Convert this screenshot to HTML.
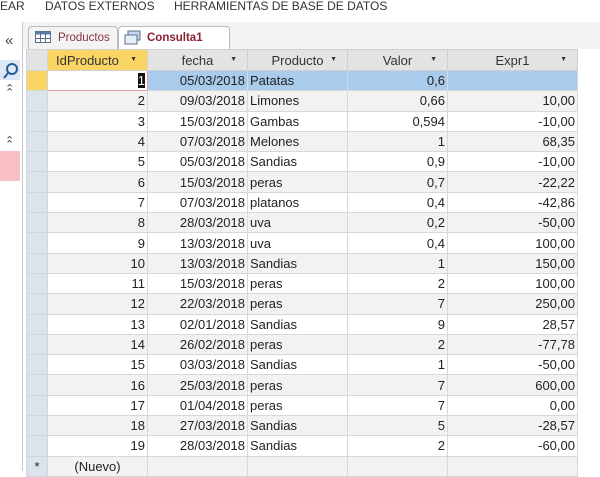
<!DOCTYPE html><html><head><style>
body{margin:0;width:600px;height:471px;overflow:hidden;background:#fff;font-family:"Liberation Sans",sans-serif;position:relative}
.menu{position:absolute;top:0;left:0;height:20px;font-size:12px;color:#333;white-space:nowrap}
.menu span{position:absolute;top:-1px}
.nav{position:absolute;left:0;top:22px;width:22px;height:449px;background:#fff;border-right:1px solid #c8c8c8}
.tabbar{position:absolute;left:23px;top:22px;width:577px;height:27px;background:#f3f3f3}
.tab{position:absolute;top:4px;height:22px;font-size:11.5px;line-height:22px;border:1px solid #bbb;border-bottom:none;border-radius:4px 4px 0 0}
table{position:absolute;left:26px;top:49px;border-collapse:collapse;table-layout:fixed;width:551px;font-size:13px;color:#222}
td{height:19.3px;padding:0 2px;border:1px solid #d8d8d8;white-space:nowrap;overflow:hidden;box-sizing:border-box}
tr{height:20.3px}
th{height:21px;background:#e3e3e3;font-weight:normal;border:1px solid #cfcfcf;position:relative;text-align:center;color:#333;font-size:13px;padding:0;box-sizing:border-box}
th i{position:absolute;right:10px;top:6px;font-style:normal;font-size:7px}
.s{background:#dde3ea;border-color:#cfd6de}
.r{text-align:right}
tr.g td{background:#f2f2f2}
tr.g td.s{background:#dde3ea}
</style></head><body>
<div class="menu"><span style="left:0">EAR</span><span style="left:45px">DATOS EXTERNOS</span><span style="left:174px">HERRAMIENTAS DE BASE DE DATOS</span></div>
<div class="nav">
<div style="position:absolute;left:5px;top:10px;font-size:15px;color:#444">«</div>
<div style="position:absolute;left:0;top:38px;width:20px;height:20px;background:#dde8f4"></div>
<svg style="position:absolute;left:2px;top:40px" width="18" height="18"><circle cx="10" cy="7" r="5" fill="none" stroke="#2a5a9a" stroke-width="2"/><line x1="6" y1="11" x2="2" y2="16" stroke="#2a5a9a" stroke-width="2"/></svg>
<div style="position:absolute;left:5px;top:60px;font-size:11px;color:#444">⌃</div>
<div style="position:absolute;left:5px;top:64px;font-size:11px;color:#444">⌃</div>
<div style="position:absolute;left:5px;top:112px;font-size:11px;color:#444">⌃</div>
<div style="position:absolute;left:5px;top:116px;font-size:11px;color:#444">⌃</div>
<div style="position:absolute;left:0;top:129px;width:20px;height:30px;background:#f8c0c4"></div>
</div>
<div class="tabbar">
<div class="tab" style="left:5px;width:88px;background:#f3f3f3;color:#8a3344"><svg style="position:absolute;left:6px;top:4px" width="16" height="12"><rect x="0.5" y="0.5" width="15" height="11" fill="#fff" stroke="#5a6e8a"/><rect x="0.5" y="0.5" width="15" height="3" fill="#5a7ca8"/><line x1="0" y1="7.5" x2="16" y2="7.5" stroke="#5a6e8a"/><line x1="5.5" y1="0" x2="5.5" y2="12" stroke="#5a6e8a"/><line x1="10.5" y1="0" x2="10.5" y2="12" stroke="#5a6e8a"/></svg><span style="margin-left:29px">Productos</span></div>
<div class="tab" style="left:95px;width:110px;background:#fff;color:#8a2233;font-weight:bold;height:23px"><svg style="position:absolute;left:5px;top:3px" width="18" height="15"><rect x="4" y="1" width="12" height="9" fill="#c8d8ea" stroke="#5a6e8a"/><rect x="1" y="5" width="12" height="9" fill="#e8eef6" stroke="#5a6e8a"/></svg><span style="margin-left:28px">Consulta1</span></div>
</div>
<table>
<colgroup><col style="width:21px"><col style="width:100px"><col style="width:100px"><col style="width:100px"><col style="width:100px"><col style="width:130px"></colgroup>
<tr><th class="s" style="background:#e3e3e3"></th><th style="background:#fbd564;text-align:left;padding-left:8px">IdProducto<i>▼</i></th><th>fecha<i>▼</i></th><th>Producto<i>▼</i></th><th>Valor<i>▼</i></th><th>Expr1<i>▼</i></th></tr>
<tr><td class="s" style="background:#fbd564"></td><td class="r" style="background:#fff;border:1px solid #e0a0a0"><span style="background:#111;color:#fff">1</span></td><td class="r" style="background:#a9cbec">05/03/2018</td><td style="background:#a9cbec">Patatas</td><td class="r" style="background:#a9cbec">0,6</td><td style="background:#a9cbec"></td></tr>
<tr class="g"><td class="s"></td><td class="r">2</td><td class="r">09/03/2018</td><td>Limones</td><td class="r">0,66</td><td class="r">10,00</td></tr>
<tr><td class="s"></td><td class="r">3</td><td class="r">15/03/2018</td><td>Gambas</td><td class="r">0,594</td><td class="r">-10,00</td></tr>
<tr class="g"><td class="s"></td><td class="r">4</td><td class="r">07/03/2018</td><td>Melones</td><td class="r">1</td><td class="r">68,35</td></tr>
<tr><td class="s"></td><td class="r">5</td><td class="r">05/03/2018</td><td>Sandias</td><td class="r">0,9</td><td class="r">-10,00</td></tr>
<tr class="g"><td class="s"></td><td class="r">6</td><td class="r">15/03/2018</td><td>peras</td><td class="r">0,7</td><td class="r">-22,22</td></tr>
<tr><td class="s"></td><td class="r">7</td><td class="r">07/03/2018</td><td>platanos</td><td class="r">0,4</td><td class="r">-42,86</td></tr>
<tr class="g"><td class="s"></td><td class="r">8</td><td class="r">28/03/2018</td><td>uva</td><td class="r">0,2</td><td class="r">-50,00</td></tr>
<tr><td class="s"></td><td class="r">9</td><td class="r">13/03/2018</td><td>uva</td><td class="r">0,4</td><td class="r">100,00</td></tr>
<tr class="g"><td class="s"></td><td class="r">10</td><td class="r">13/03/2018</td><td>Sandias</td><td class="r">1</td><td class="r">150,00</td></tr>
<tr><td class="s"></td><td class="r">11</td><td class="r">15/03/2018</td><td>peras</td><td class="r">2</td><td class="r">100,00</td></tr>
<tr class="g"><td class="s"></td><td class="r">12</td><td class="r">22/03/2018</td><td>peras</td><td class="r">7</td><td class="r">250,00</td></tr>
<tr><td class="s"></td><td class="r">13</td><td class="r">02/01/2018</td><td>Sandias</td><td class="r">9</td><td class="r">28,57</td></tr>
<tr class="g"><td class="s"></td><td class="r">14</td><td class="r">26/02/2018</td><td>peras</td><td class="r">2</td><td class="r">-77,78</td></tr>
<tr><td class="s"></td><td class="r">15</td><td class="r">03/03/2018</td><td>Sandias</td><td class="r">1</td><td class="r">-50,00</td></tr>
<tr class="g"><td class="s"></td><td class="r">16</td><td class="r">25/03/2018</td><td>peras</td><td class="r">7</td><td class="r">600,00</td></tr>
<tr><td class="s"></td><td class="r">17</td><td class="r">01/04/2018</td><td>peras</td><td class="r">7</td><td class="r">0,00</td></tr>
<tr class="g"><td class="s"></td><td class="r">18</td><td class="r">27/03/2018</td><td>Sandias</td><td class="r">5</td><td class="r">-28,57</td></tr>
<tr><td class="s"></td><td class="r">19</td><td class="r">28/03/2018</td><td>Sandias</td><td class="r">2</td><td class="r">-60,00</td></tr>
<tr class="g"><td class="s" style="text-align:center">*</td><td style="text-align:center">(Nuevo)</td><td></td><td></td><td></td><td></td></tr>
</table>
</body></html>
